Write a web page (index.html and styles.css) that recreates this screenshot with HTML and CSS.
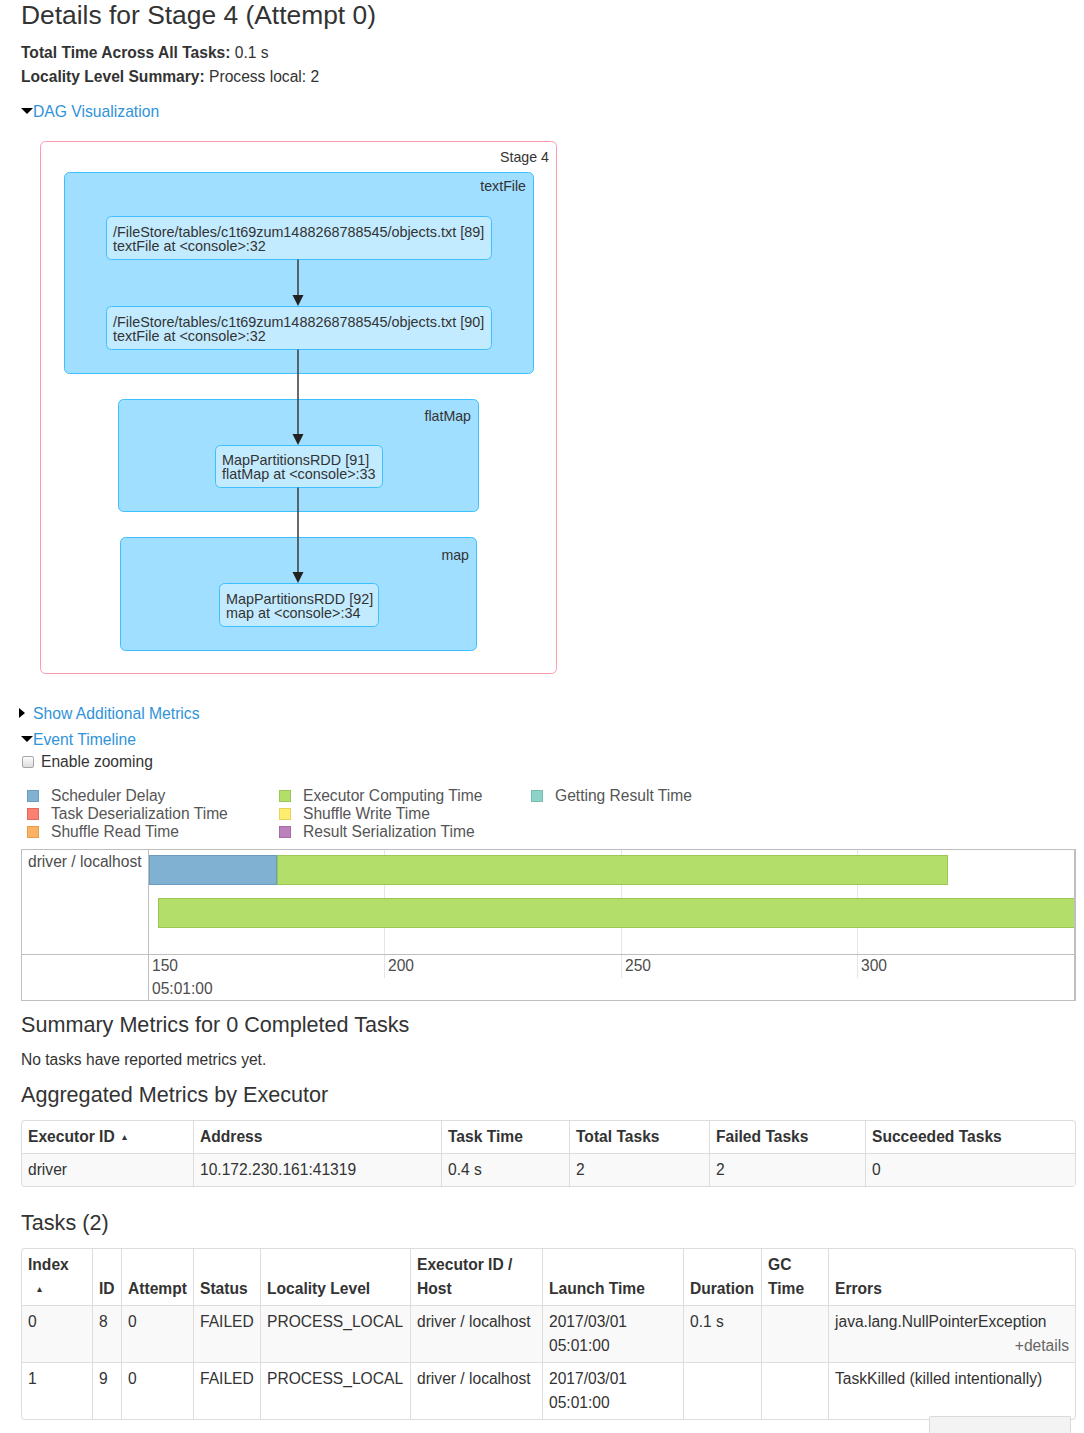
FILE: index.html
```html
<!DOCTYPE html>
<html>
<head>
<meta charset="utf-8">
<title>Details for Stage 4</title>
<link rel="stylesheet" href="styles.css">
</head>
<body>
<div class="page">
  <h3 class="title">Details for Stage 4 (Attempt 0)</h3>
  <ul class="summary">
    <li><strong>Total Time Across All Tasks:</strong> 0.1 s</li>
    <li><strong>Locality Level Summary:</strong> Process local: 2</li>
  </ul>
  <div class="toggle dag-toggle"><span class="arrow-open"></span><a href="#">DAG Visualization</a></div>

  <svg class="dag" width="520" height="534" viewBox="0 0 520 534" xmlns="http://www.w3.org/2000/svg">
    <rect class="stage" x="1.5" y="1.5" width="516" height="532" rx="5" ry="5"/>
    <text class="clabel" x="510" y="22" text-anchor="end">Stage 4</text>

    <rect class="cluster" x="25.5" y="32.5" width="469" height="201" rx="5" ry="5"/>
    <text class="clabel" x="487" y="51" text-anchor="end">textFile</text>

    <rect class="cluster" x="79.5" y="259.5" width="360" height="112" rx="5" ry="5"/>
    <text class="clabel" x="432" y="281" text-anchor="end">flatMap</text>

    <rect class="cluster" x="81.5" y="397.5" width="356" height="113" rx="5" ry="5"/>
    <text class="clabel" x="430" y="420" text-anchor="end">map</text>

    <rect class="node" x="67.5" y="76.5" width="385" height="43" rx="5" ry="5"/>
    <text class="ntext" x="74" y="97">/FileStore/tables/c1t69zum1488268788545/objects.txt [89]</text>
    <text class="ntext" x="74" y="111">textFile at &lt;console&gt;:32</text>

    <rect class="node" x="67.5" y="166.5" width="385" height="43" rx="5" ry="5"/>
    <text class="ntext" x="74" y="187">/FileStore/tables/c1t69zum1488268788545/objects.txt [90]</text>
    <text class="ntext" x="74" y="201">textFile at &lt;console&gt;:32</text>

    <rect class="node" x="176.5" y="305.5" width="167" height="42" rx="5" ry="5"/>
    <text class="ntext" x="183" y="325">MapPartitionsRDD [91]</text>
    <text class="ntext" x="183" y="339">flatMap at &lt;console&gt;:33</text>

    <rect class="node" x="180.5" y="443.5" width="159" height="43" rx="5" ry="5"/>
    <text class="ntext" x="187" y="464">MapPartitionsRDD [92]</text>
    <text class="ntext" x="187" y="478">map at &lt;console&gt;:34</text>

    <line class="edge" x1="259" y1="119.5" x2="259" y2="157"/>
    <polygon class="head" points="253.5,155 264.5,155 259,166"/>
    <line class="edge" x1="259" y1="209.5" x2="259" y2="296"/>
    <polygon class="head" points="253.5,294 264.5,294 259,305"/>
    <line class="edge" x1="259" y1="347.5" x2="259" y2="434"/>
    <polygon class="head" points="253.5,432 264.5,432 259,443"/>
  </svg>

  <div class="toggle show-metrics"><span class="arrow-closed"></span><a href="#">Show Additional Metrics</a></div>
  <div class="toggle event-toggle"><span class="arrow-open"></span><a href="#">Event Timeline</a></div>
  <label class="zoom"><input type="checkbox" class="check">Enable zooming</label>

  <div class="legend">
    <div class="legend-item"><span class="swatch sw-sched"></span>Scheduler Delay</div>
    <div class="legend-item"><span class="swatch sw-deser"></span>Task Deserialization Time</div>
    <div class="legend-item"><span class="swatch sw-shread"></span>Shuffle Read Time</div>
    <div class="legend-item"><span class="swatch sw-exec"></span>Executor Computing Time</div>
    <div class="legend-item"><span class="swatch sw-shwrite"></span>Shuffle Write Time</div>
    <div class="legend-item"><span class="swatch sw-ser"></span>Result Serialization Time</div>
    <div class="legend-item"><span class="swatch sw-get"></span>Getting Result Time</div>
  </div>

  <div class="timeline">
    <div class="tl-labels">
      <div class="tl-label-fg">driver / localhost</div>
      <div class="tl-label-axis"></div>
    </div>
    <div class="tl-center">
      <div class="tl-fg">
        <span class="grid g1"></span><span class="grid g2"></span><span class="grid g3"></span>
        <div class="bar bar1"><span class="seg seg-sched"></span><span class="seg seg-exec"></span></div>
        <div class="bar bar2"><span class="seg seg-exec"></span></div>
      </div>
      <div class="tl-axis">
        <span class="grid g1 minor"></span><span class="grid g2 minor"></span><span class="grid g3 minor"></span>
        <span class="tick t0">150</span>
        <span class="tick t1">200</span>
        <span class="tick t2">250</span>
        <span class="tick t3">300</span>
        <span class="tick major">05:01:00</span>
      </div>
    </div>
  </div>

  <h4 class="section summary-h">Summary Metrics for 0 Completed Tasks</h4>
  <p class="note">No tasks have reported metrics yet.</p>

  <h4 class="section">Aggregated Metrics by Executor</h4>
  <table class="table exec">
    <colgroup>
      <col class="c-172"><col class="c-248"><col class="c-128"><col class="c-140"><col class="c-156"><col>
    </colgroup>
    <thead>
      <tr><th>Executor ID <span class="sort">&#x25B4;</span></th><th>Address</th><th>Task Time</th><th>Total Tasks</th><th>Failed Tasks</th><th>Succeeded Tasks</th></tr>
    </thead>
    <tbody>
      <tr><td>driver</td><td>10.172.230.161:41319</td><td>0.4 s</td><td>2</td><td>2</td><td>0</td></tr>
    </tbody>
  </table>

  <h4 class="section tasks-h">Tasks (2)</h4>
  <table class="table tasks">
    <colgroup>
      <col class="c-71"><col class="c-29"><col class="c-72"><col class="c-67"><col class="c-150"><col class="c-132"><col class="c-141"><col class="c-78"><col class="c-67"><col>
    </colgroup>
    <thead>
      <tr>
        <th>Index<br><span class="sort sort-below">&#x25B4;</span></th>
        <th>ID</th>
        <th>Attempt</th>
        <th>Status</th>
        <th>Locality Level</th>
        <th>Executor ID /<br>Host</th>
        <th>Launch Time</th>
        <th>Duration</th>
        <th>GC<br>Time</th>
        <th>Errors</th>
      </tr>
    </thead>
    <tbody>
      <tr>
        <td>0</td><td>8</td><td>0</td><td>FAILED</td><td>PROCESS_LOCAL</td><td>driver / localhost</td>
        <td>2017/03/01<br>05:01:00</td><td>0.1 s</td><td></td>
        <td>java.lang.NullPointerException<div class="details">+details</div></td>
      </tr>
      <tr>
        <td>1</td><td>9</td><td>0</td><td>FAILED</td><td>PROCESS_LOCAL</td><td>driver / localhost</td>
        <td>2017/03/01<br>05:01:00</td><td></td><td></td>
        <td>TaskKilled (killed intentionally)</td>
      </tr>
    </tbody>
  </table>
</div>
<div class="corner-box"></div>
</body>
</html>
```

FILE: styles.css
```css
* { box-sizing: border-box; }
html, body { margin: 0; padding: 0; background: #fff; }
body {
  font-family: "Liberation Sans", Arial, Helvetica, sans-serif;
  font-size: 15.6px;
  color: #333;
  position: relative;
  min-height: 1433px;
  overflow: hidden;
}
.page { padding: 0 8px 0 21px; }
a { color: #2f93d9; text-decoration: none; }

.title {
  font-size: 26.4px;
  font-weight: normal;
  line-height: 30px;
  margin: 0;
  color: #333;
}
.summary {
  list-style: none;
  margin: 11px 0 0;
  padding: 0;
  line-height: 24px;
  font-size: 15.6px;
}
.summary strong { font-weight: bold; }

.toggle { line-height: 24px; font-size: 15.7px; }
.dag-toggle { margin-top: 11px; }
.arrow-open {
  display: inline-block;
  width: 0; height: 0;
  border-left: 6px solid transparent;
  border-right: 6px solid transparent;
  border-top: 6px solid #000;
  vertical-align: middle;
  margin: 0 0 3px 0;
}
.arrow-closed {
  display: inline-block;
  width: 0; height: 0;
  border-top: 5px solid transparent;
  border-bottom: 5px solid transparent;
  border-left: 6px solid #000;
  vertical-align: middle;
  margin: 0 8px 3px -2px;
}

.dag { display: block; margin: 16px 0 0 18px; font-family: "Liberation Sans", Arial, sans-serif; }
.dag .stage { fill: #fff; stroke: #ff99ac; stroke-width: 1; }
.dag .cluster { fill: #a0dfff; stroke: #3ec0ff; stroke-width: 1; }
.dag .node { fill: #c3ebff; stroke: #3ec0ff; stroke-width: 1; }
.dag .clabel { font-size: 14.2px; fill: #333; }
.dag .ntext { font-size: 14.4px; fill: #333; }
.dag .edge { stroke: #444; stroke-width: 1.6; }
.dag .head { fill: #222; }

.show-metrics { margin-top: 27px; line-height: 26px; }
.event-toggle { line-height: 25px; }

.zoom {
  display: flex;
  align-items: center;
  height: 19px;
  color: #333;
}
.check {
  appearance: none;
  -webkit-appearance: none;
  width: 12px;
  height: 12px;
  margin: 0 7px 0 1px;
  border: 1px solid #a6a6a6;
  border-radius: 2px;
  background: linear-gradient(#fcfcfc, #dedede);
}

.legend {
  margin-top: 16px;
  padding-left: 6px;
  display: grid;
  grid-template-rows: repeat(3, 18px);
  grid-template-columns: 252px 252px 252px;
  grid-auto-flow: column;
  color: #555;
}
.legend-item { display: flex; align-items: center; line-height: 18px; }
.swatch {
  display: inline-block;
  width: 12px;
  height: 12px;
  margin-right: 12px;
  border: 1px solid;
}
.sw-sched { background: #80b1d3; border-color: #6a9cc0; }
.sw-deser { background: #fb8072; border-color: #e36b5e; }
.sw-shread { background: #fdb462; border-color: #e59c4c; }
.sw-exec { background: #b3de69; border-color: #9cc655; }
.sw-shwrite { background: #ffed6f; border-color: #e6d45a; }
.sw-ser { background: #bc80bd; border-color: #a46ba5; }
.sw-get { background: #8dd3c7; border-color: #76bdb1; }

.timeline {
  margin-top: 8px;
  width: 1055px;
  height: 152px;
  display: flex;
  border: 1px solid #bfbfbf;
  border-right: 2px solid #bfbfbf;
  color: #4d4d4d;
}
.tl-labels { width: 127px; border-right: 1px solid #bfbfbf; flex: none; }
.tl-label-fg {
  height: 105px;
  border-bottom: 1px solid #bfbfbf;
  padding: 0 0 0 6px;
  line-height: 24px;
}
.tl-center { flex: 1; position: relative; overflow: hidden; }
.tl-fg { position: relative; height: 105px; border-bottom: 1px solid #bfbfbf; }
.tl-axis { position: relative; height: 45px; }
.grid { position: absolute; top: 0; width: 1px; height: 104px; background: #e5e5e5; }
.grid.minor { height: 23px; }
.g1 { left: 235px; }
.g2 { left: 472px; }
.g3 { left: 708px; }
.bar { position: absolute; height: 30px; display: flex; }
.bar1 { left: 0; top: 5px; width: 799px; }
.bar2 { left: 9px; top: 48px; width: 1000px; }
.seg { display: block; height: 30px; border: 1px solid; }
.seg-sched { width: 128px; background: #80b1d3; border-color: #6a9cc0; }
.seg-exec { flex: 1; background: #b3de69; border-color: #9cc655; }
.tick { position: absolute; top: 1px; line-height: 20px; }
.t0 { left: 3px; }
.t1 { left: 239px; }
.t2 { left: 476px; }
.t3 { left: 712px; }
.tick.major { left: 3px; top: 24px; }

.section {
  font-size: 21.6px;
  font-weight: normal;
  line-height: 26px;
  margin: 12px 0 0;
  color: #333;
}
.summary-h { margin-top: 11px; }
.tasks-h { margin-top: 23px; }
.note { margin: 12px 0 0; line-height: 20px; }

.table {
  margin-top: 12px;
  width: 1055px;
  table-layout: fixed;
  border-collapse: separate;
  border-spacing: 0;
  border: 1px solid #ddd;
  border-left: 0;
  border-radius: 4px;
  line-height: 24px;
  color: #333;
}
.table th, .table td {
  padding: 4px 6px;
  border-left: 1px solid #ddd;
  border-top: 1px solid #ddd;
  text-align: left;
  vertical-align: top;
}
.table thead tr:first-child th { border-top: 0; }
.table th { font-weight: bold; vertical-align: bottom; }
.table thead th:first-child { border-top-left-radius: 4px; }
.table tbody tr:last-child td:first-child { border-bottom-left-radius: 4px; }
.table tbody tr:nth-child(odd) td { background: #f9f9f9; }
.sort { font-size: 10px; font-weight: normal; vertical-align: 2px; margin-left: 3px; }
.sort-below { margin-left: 9px; }
.details { text-align: right; color: #666; }

.c-172 { width: 172px; }
.c-248 { width: 248px; }
.c-128 { width: 128px; }
.c-140 { width: 140px; }
.c-156 { width: 156px; }
.c-71 { width: 71px; }
.c-29 { width: 29px; }
.c-72 { width: 72px; }
.c-67 { width: 67px; }
.c-150 { width: 150px; }
.c-132 { width: 132px; }
.c-141 { width: 141px; }
.c-78 { width: 78px; }

.corner-box {
  position: absolute;
  left: 929px;
  top: 1416px;
  width: 142px;
  height: 30px;
  background: #f3f3f3;
  border: 1px solid #d9d9d9;
  border-bottom: 0;
  border-radius: 2px 2px 0 0;
}
```
